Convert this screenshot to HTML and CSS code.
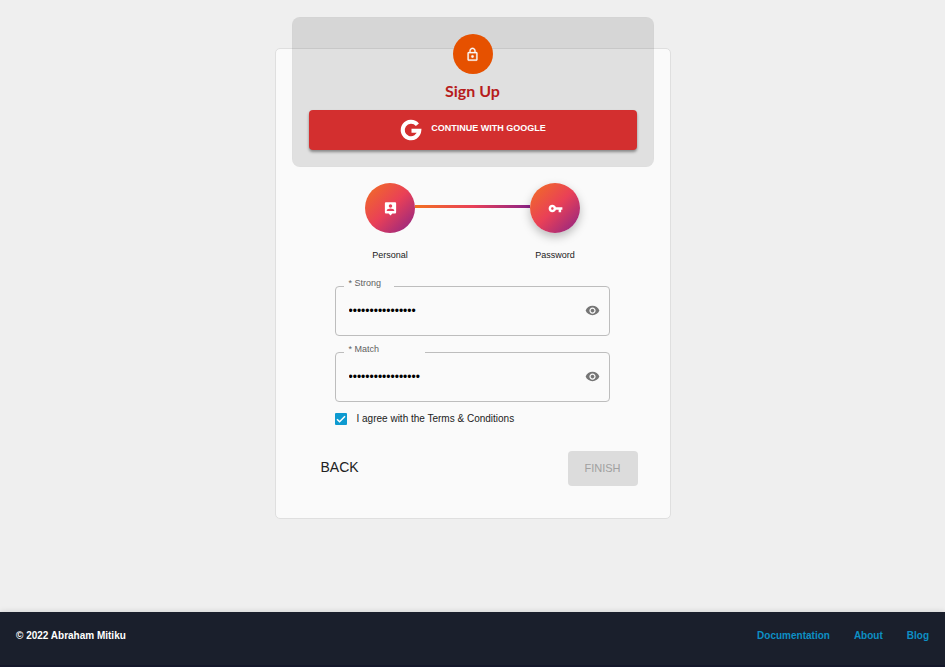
FILE: index.html
```html
<!DOCTYPE html>
<html lang="en">
<head>
<meta charset="utf-8">
<meta name="viewport" content="width=device-width, initial-scale=1">
<title>Sign Up</title>
<link rel="stylesheet" href="styles.css">
</head>
<body>
<main class="main">
  <section class="card">
    <header class="hero">
      <div class="avatar">
        <svg viewBox="0 0 24 24" width="15" height="15" aria-hidden="true"><path fill="currentColor" stroke="currentColor" stroke-width=".4" d="M12 17c1.100 0 2-.9 2-2s-.9-2-2-2-2 .9-2 2 .9 2 2 2zm6-9h-1V6c0-2.760-2.240-5-5-5S7 3.240 7 6v2H6c-1.100 0-2 .9-2 2v10c0 1.100.9 2 2 2h12c1.100 0 2-.9 2-2V10c0-1.100-.9-2-2-2zM9 6c0-1.660 1.340-3 3-3s3 1.340 3 3v2H9V6zm9 14H6V10h12v10z"/></svg>
      </div>
      <h1 class="title">Sign Up</h1>
      <button class="google" type="button">
        <svg viewBox="0 0 24 24" width="24" height="24" aria-hidden="true"><path fill="none" stroke="currentColor" stroke-width="4" d="M18.400 6.700A8.300 8.300 0 1 0 20.300 12.700H12.500"/></svg>
        <span class="google-text">CONTINUE WITH GOOGLE</span>
      </button>
    </header>

    <ol class="steps">
      <li class="step">
        <span class="dot"><svg viewBox="0 0 24 24" width="15" height="15" aria-hidden="true"><path fill="currentColor" d="M19 2H5c-1.100 0-2 .9-2 2v14c0 1.100.9 2 2 2h4l3 3 3-3h4c1.100 0 2-.9 2-2V4c0-1.100-.9-2-2-2zm-7 3.300c1.490 0 2.700 1.210 2.700 2.700s-1.210 2.700-2.700 2.700S9.300 9.490 9.300 8s1.210-2.700 2.700-2.700zM18 16H6v-.9c0-2 4-3.100 6-3.100s6 1.100 6 3.100v.9z"/></svg></span>
        <span class="step-label">Personal</span>
      </li>
      <li class="line" aria-hidden="true"></li>
      <li class="step">
        <span class="dot active"><svg viewBox="0 0 24 24" width="15" height="15" aria-hidden="true"><path fill="currentColor" d="M12.650 10C11.830 7.670 9.610 6 7 6c-3.310 0-6 2.690-6 6s2.690 6 6 6c2.610 0 4.830-1.670 5.650-4H17v4h4v-4h2v-4H12.650zM7 14c-1.100 0-2-.9-2-2s.9-2 2-2 2 .9 2 2-.9 2-2 2z"/></svg></span>
        <span class="step-label">Password</span>
      </li>
    </ol>

    <form class="form">
      <div class="fields">
        <fieldset class="field">
          <legend class="legend"><label for="strong">* Strong</label></legend>
          <div class="row">
            <input class="input" id="strong" type="password" value="abcdefghijklmnop">
            <button class="eye" type="button" aria-label="Show password"><svg viewBox="0 0 24 24" width="15" height="15" aria-hidden="true"><path fill="currentColor" d="M12 4.500C7 4.500 2.730 7.610 1 12c1.730 4.390 6 7.500 11 7.500s9.270-3.110 11-7.500c-1.730-4.390-6-7.500-11-7.500zM12 17c-2.760 0-5-2.240-5-5s2.240-5 5-5 5 2.240 5 5-2.240 5-5 5zm0-8c-1.660 0-3 1.340-3 3s1.340 3 3 3 3-1.340 3-3-1.340-3-3-3z"/></svg></button>
          </div>
        </fieldset>
        <fieldset class="field">
          <legend class="legend wide"><label for="match">* Match</label></legend>
          <div class="row">
            <input class="input" id="match" type="password" value="abcdefghijklmnopq">
            <button class="eye" type="button" aria-label="Show password"><svg viewBox="0 0 24 24" width="15" height="15" aria-hidden="true"><path fill="currentColor" d="M12 4.500C7 4.500 2.730 7.610 1 12c1.730 4.390 6 7.500 11 7.500s9.270-3.110 11-7.500c-1.730-4.390-6-7.500-11-7.500zM12 17c-2.760 0-5-2.240-5-5s2.240-5 5-5 5 2.240 5 5-2.240 5-5 5zm0-8c-1.660 0-3 1.340-3 3s1.340 3 3 3 3-1.340 3-3-1.340-3-3-3z"/></svg></button>
          </div>
        </fieldset>
        <div class="agree">
          <span class="check">
            <input class="check-input" id="agree" type="checkbox" checked>
            <svg class="tick" viewBox="0 0 12 12" width="12" height="12" aria-hidden="true"><path fill="none" stroke="currentColor" stroke-width="1.500" d="M2 6.200L4.600 8.800L10 3.300"/></svg>
          </span>
          <label for="agree">I agree with the Terms &amp; Conditions</label>
        </div>
      </div>
      <div class="actions">
        <button class="back" type="button">BACK</button>
        <button class="finish" type="submit" disabled>FINISH</button>
      </div>
    </form>
  </section>
</main>
<footer class="footer">
  <span class="copy">© 2022 Abraham Mitiku</span>
  <nav class="links">
    <a href="#documentation">Documentation</a>
    <a href="#about">About</a>
    <a href="#blog">Blog</a>
  </nav>
</footer>
</body>
</html>
```
FILE: styles.css
```css
* {
  box-sizing: border-box;
}

body {
  margin: 0;
  min-height: 100vh;
  display: flex;
  flex-direction: column;
  background: #efefef;
  color: #212121;
  font-family: "Liberation Sans", Arial, sans-serif;
  font-size: 10px;
}

button,
input {
  font-family: inherit;
  margin: 0;
}

button {
  border: 0;
  padding: 0;
  background: none;
}

svg {
  display: block;
}

.main {
  flex: 1;
  padding: 48px 16px;
}

.card {
  width: 100%;
  max-width: 396px;
  margin: 0 auto;
  padding: 0 16px 32px;
  border: 1px solid #dfdfdf;
  border-radius: 5px;
  background: #fafafa;
}

.hero {
  display: flex;
  flex-direction: column;
  align-items: center;
  margin-top: -32px;
  padding: 16px;
  border: 1px solid rgba(0, 0, 0, 0.01);
  border-radius: 8px;
  background: rgba(0, 0, 0, 0.1);
}

.avatar {
  display: flex;
  align-items: center;
  justify-content: center;
  width: 40px;
  height: 40px;
  border-radius: 50%;
  background: #e65100;
  color: #fafafa;
}

.title {
  margin: 5px 0 7px;
  color: #b71c1c;
  font-family: Lato, sans-serif;
  font-size: 16px;
  font-weight: 700;
  line-height: 24px;
}

.google {
  display: flex;
  align-items: center;
  justify-content: center;
  gap: 8px;
  width: 100%;
  height: 40px;
  border-radius: 4px;
  background: #d32f2f;
  color: #fff;
  font-size: 9px;
  font-weight: 700;
  box-shadow: 0 2px 3px rgba(0, 0, 0, 0.4);
}

.google-text {
  padding-bottom: 4px;
}

.steps {
  display: flex;
  justify-content: center;
  margin: 16px 0 0;
  padding: 0;
  list-style: none;
}

.step {
  display: flex;
  flex-direction: column;
  align-items: center;
  gap: 16px;
  width: 50px;
}

.dot {
  display: flex;
  align-items: center;
  justify-content: center;
  width: 50px;
  height: 50px;
  border-radius: 50%;
  background: linear-gradient(136deg, #f27121 0%, #e94057 50%, #8a2387 100%);
  color: #fff;
}

.active {
  box-shadow: 0 4px 10px rgba(0, 0, 0, 0.25);
}

.step-label {
  font-size: 9px;
  line-height: 12px;
  color: #212121;
}

.line {
  width: 115px;
  height: 3px;
  margin-top: 22px;
  background: linear-gradient(95deg, #f27121 0%, #e94057 50%, #8a2387 100%);
}

.fields {
  display: flex;
  flex-direction: column;
  gap: 8px;
  margin: 17px 44px 0 43px;
}

.field {
  min-width: 0;
  height: 58px;
  margin: 0;
  padding: 0 9px 0 8px;
  border: 1px solid #bdbdbd;
  border-radius: 4px;
}

.legend {
  width: 50px;
  padding: 0 0 6px 5px;
  color: #616161;
  font-size: 9px;
  line-height: 11px;
}

.wide {
  width: 81px;
}

.row {
  display: flex;
  align-items: center;
  height: 31px;
}

.input {
  flex: 1;
  min-width: 0;
  padding: 0 5px;
  border: 0;
  outline: 0;
  background: none;
  color: #000;
  font-size: 12px;
}

.eye {
  color: #757575;
}

.agree {
  display: flex;
  align-items: center;
  gap: 10px;
  line-height: 18px;
}

.check {
  position: relative;
  width: 12px;
  height: 12px;
}

.check-input {
  display: block;
  width: 12px;
  height: 12px;
  appearance: none;
  border-radius: 1px;
  background: #0d9ad0;
}

.tick {
  position: absolute;
  inset: 0;
  color: #fff;
  pointer-events: none;
}

.actions {
  display: flex;
  align-items: center;
  justify-content: space-between;
  margin: 23px 16px 0 29px;
}

.back {
  height: 35px;
  padding-bottom: 3px;
  color: #212121;
  font-size: 14px;
}

.finish {
  width: 70px;
  height: 35px;
  padding-bottom: 2px;
  border-radius: 4px;
  background: #dcdcdc;
  color: #a0a0a0;
  font-size: 11px;
}

.footer {
  display: flex;
  align-items: center;
  justify-content: space-between;
  height: 55px;
  padding: 0 16px 6px;
  border-bottom: 2px solid #14172a;
  background: #1a1f2c;
  color: #fff;
  font-weight: 700;
  box-shadow: 0 0 6px rgba(0, 0, 0, 0.15);
}

.links {
  display: flex;
  gap: 24px;
}

.links a {
  color: #0d8fc4;
  text-decoration: none;
}
```
